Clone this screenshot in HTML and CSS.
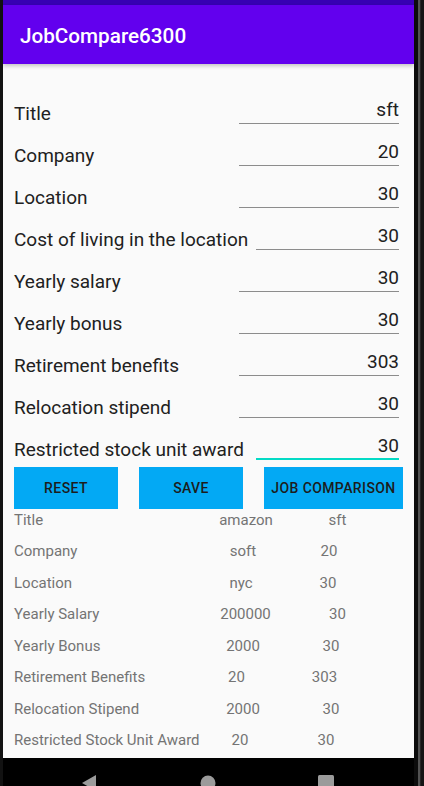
FILE: index.html
```html
<!DOCTYPE html>
<html>
<head>
<meta charset="utf-8">
<link rel="stylesheet" href="styles.css">
</head>
<body>
<div class="device">
  <div class="bezel-left"></div>
  <div class="screen">
    <div class="status-bar"></div>
    <header class="app-bar"><h1 class="app-title">JobCompare6300</h1></header>
    <main class="content">
      <section class="form">
        <div class="field"><span class="label">Title</span><span class="input">sft</span></div>
        <div class="field"><span class="label">Company</span><span class="input">20</span></div>
        <div class="field"><span class="label">Location</span><span class="input">30</span></div>
        <div class="field"><span class="label">Cost of living in the location</span><span class="input input-short">30</span></div>
        <div class="field"><span class="label">Yearly salary</span><span class="input">30</span></div>
        <div class="field"><span class="label">Yearly bonus</span><span class="input">30</span></div>
        <div class="field"><span class="label">Retirement benefits</span><span class="input">303</span></div>
        <div class="field"><span class="label">Relocation stipend</span><span class="input">30</span></div>
        <div class="field"><span class="label">Restricted stock unit award</span><span class="input input-short input-focus">30</span></div>
      </section>
      <div class="buttons">
        <button class="btn btn-reset">RESET</button>
        <button class="btn btn-save">SAVE</button>
        <button class="btn btn-compare">JOB COMPARISON</button>
      </div>
      <section class="table">
        <div class="trow"><span class="tlabel">Title</span><span class="tcell r3">amazon</span><span class="tcell r6">sft</span></div>
        <div class="trow"><span class="tlabel">Company</span><span class="tcell">soft</span><span class="tcell l2">20</span></div>
        <div class="trow"><span class="tlabel">Location</span><span class="tcell l2">nyc</span><span class="tcell l3">30</span></div>
        <div class="trow"><span class="tlabel">Yearly Salary</span><span class="tcell r2">200000</span><span class="tcell r6">30</span></div>
        <div class="trow"><span class="tlabel">Yearly Bonus</span><span class="tcell">2000</span><span class="tcell">30</span></div>
        <div class="trow"><span class="tlabel">Retirement Benefits</span><span class="tcell l6">20</span><span class="tcell l6">303</span></div>
        <div class="trow"><span class="tlabel">Relocation Stipend</span><span class="tcell">2000</span><span class="tcell">30</span></div>
        <div class="trow"><span class="tlabel">Restricted Stock Unit Award</span><span class="tcell l3">20</span><span class="tcell l5">30</span></div>
      </section>
    </main>
    <nav class="nav-bar">
      <svg class="nav-back" width="14" height="11" viewBox="0 0 14 11"><polygon points="14,0 14,16 0,8" fill="#9b9b9b"/></svg>
      <svg class="nav-home" width="16" height="11" viewBox="0 0 16 11"><circle cx="8" cy="8" r="7.5" fill="#9b9b9b"/></svg>
      <svg class="nav-recent" width="16" height="11" viewBox="0 0 16 11"><rect x="0" y="0" width="16" height="16" rx="1.5" fill="#9b9b9b"/></svg>
    </nav>
  </div>
  <div class="bezel-right"></div>
</div>
</body>
</html>
```

FILE: styles.css
```css
* { box-sizing: border-box; }
html, body { margin: 0; padding: 0; }
body {
  width: 424px;
  height: 786px;
  overflow: hidden;
  background: #111;
  font-family: Roboto, "Liberation Sans", sans-serif;
}
.device {
  display: flex;
  height: 786px;
}
.bezel-left {
  width: 3px;
  background: #121212;
}
.bezel-right {
  width: 10px;
  background: linear-gradient(to right, #0c0c0c 0, #0c0c0c 4px, #3a3a3a 4px, #6a6a6a 5px, #3a3a3a 6px, #151515 7px, #151515 10px);
}
.screen {
  width: 411px;
  display: flex;
  flex-direction: column;
  background: #fafafa;
}
.status-bar {
  flex: 0 0 5px;
  background: #3700b3;
}
.app-bar {
  flex: 0 0 59px;
  background: #6200ee;
  display: flex;
  align-items: center;
  padding-left: 17px;
  box-shadow: 0 2px 4px rgba(0,0,0,0.22);
  position: relative;
  z-index: 1;
}
.app-title {
  margin: 0;
  color: #fff;
  font-size: 20.7px;
  font-weight: 500;
  line-height: 24px;
  padding-top: 2px;
}
.content {
  flex: 1 1 auto;
  min-height: 0;
  overflow: hidden;
  background: #fafafa;
  padding-top: 18px;
}
.form {
  padding: 0 15px 0 11px;
}
.field {
  height: 42px;
  display: flex;
  align-items: flex-end;
  justify-content: space-between;
}
.label {
  font-size: 19px;
  line-height: 21px;
  color: #212121;
  white-space: nowrap;
}
.input {
  width: 160px;
  text-align: right;
  font-size: 19px;
  line-height: 21px;
  color: #212121;
  padding-bottom: 3px;
  border-bottom: 1px solid #8c8c8c;
}
.input-short {
  width: 143px;
}
.input-focus {
  border-bottom: 2px solid #03dac5;
  padding-bottom: 2px;
}
.buttons {
  display: flex;
  padding: 7px 0 0 11px;
  gap: 21px;
}
.btn {
  height: 42px;
  border: none;
  border-radius: 0;
  background: #03a9f4;
  color: #1c1c1c;
  font-family: Roboto, "Liberation Sans", sans-serif;
  font-size: 14px;
  font-weight: 500;
  letter-spacing: 0.4px;
  padding: 0;
  margin: 0;
}
.btn-reset, .btn-save { width: 104px; }
.btn-compare { width: 139px; }
.table {
  padding-left: 11px;
}
.trow {
  display: grid;
  grid-template-columns: 186px 86px 90px;
  height: 31.57px;
  padding-top: 1.5px;
  font-size: 15px;
  line-height: 19px;
  color: #747474;
}
.tlabel { white-space: nowrap; }
.tcell { text-align: center; white-space: nowrap; }
.r2 { padding-left: 5px; }
.r3 { padding-left: 6px; }
.r6 { padding-left: 13px; }
.l2 { padding-right: 4px; }
.l3 { padding-right: 6px; }
.l5 { padding-right: 10px; }
.l6 { padding-right: 13px; }
.nav-bar {
  flex: 0 0 28px;
  background: #000;
  display: flex;
  align-items: flex-start;
  padding-top: 17px;
  overflow: hidden;
}
.nav-back { margin-left: 79px; display: block; }
.nav-home { margin-left: 104px; display: block; }
.nav-recent { margin-left: 102px; display: block; }
```
